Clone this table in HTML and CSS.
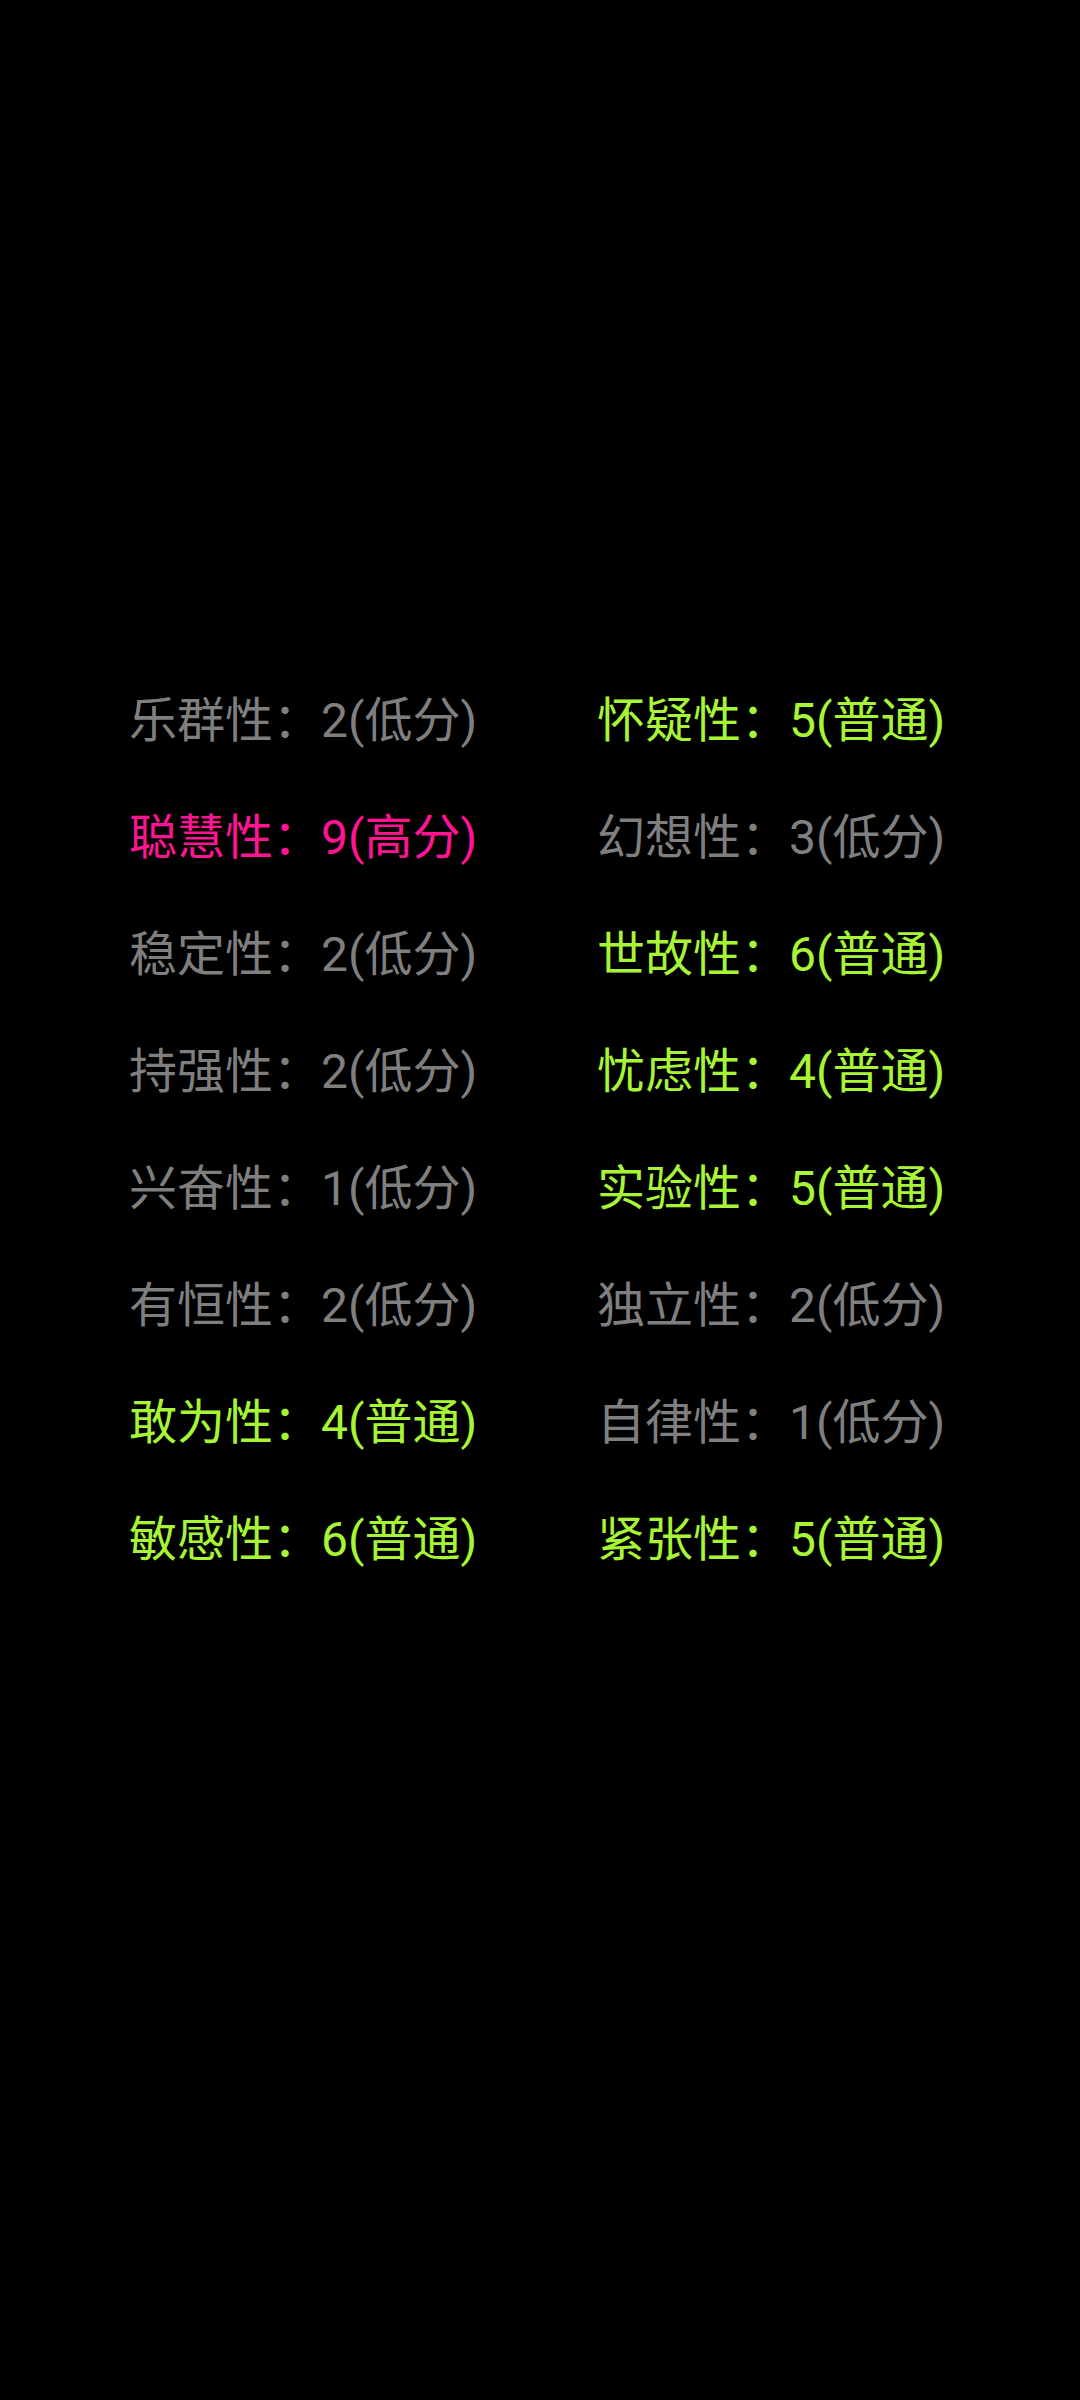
FILE: index.html
```html
<!DOCTYPE html>
<html lang="zh">
<head>
  <meta charset="UTF-8" />
  <meta name="viewport" content="width=device-width, initial-scale=1.0"/>
  <title>16PF</title>
  <link rel="stylesheet" href="styles.css">
</head>
<body>

  <div class="result-grid">
    <p class="low">乐群性：2(低分)</p>
    <p class="mid">怀疑性：5(普通)</p>

    <p class="high">聪慧性：9(高分)</p>
    <p class="low">幻想性：3(低分)</p>

    <p class="low">稳定性：2(低分)</p>
    <p class="mid">世故性：6(普通)</p>

    <p class="low">持强性：2(低分)</p>
    <p class="mid">忧虑性：4(普通)</p>

    <p class="low">兴奋性：1(低分)</p>
    <p class="mid">实验性：5(普通)</p>

    <p class="low">有恒性：2(低分)</p>
    <p class="low">独立性：2(低分)</p>

    <p class="mid">敢为性：4(普通)</p>
    <p class="low">自律性：1(低分)</p>

    <p class="mid">敏感性：6(普通)</p>
    <p class="mid">紧张性：5(普通)</p>
  </div>

</body>
</html>
```

FILE: styles.css
```css
/* Base Reset */
* {
  margin: 0;
  padding: 0;
  box-sizing: border-box;
  font-family: Roboto, 'Noto Sans CJK SC', sans-serif;
}

body {
  background: #000;
  width: 1080px;
  min-height: 2400px;
}

/* Result Grid */
.result-grid {
  display: grid;
  grid-template-columns: 468px 468px;
  padding: 662px 0 0 129px;
}

.result-grid p {
  font-size: 48px;
  line-height: 117px;
  white-space: nowrap;
}

/* Score levels */
.low {
  color: #7f7f7f;
}

.mid {
  color: #a8f535;
}

.high {
  color: #ff1493;
}
```
